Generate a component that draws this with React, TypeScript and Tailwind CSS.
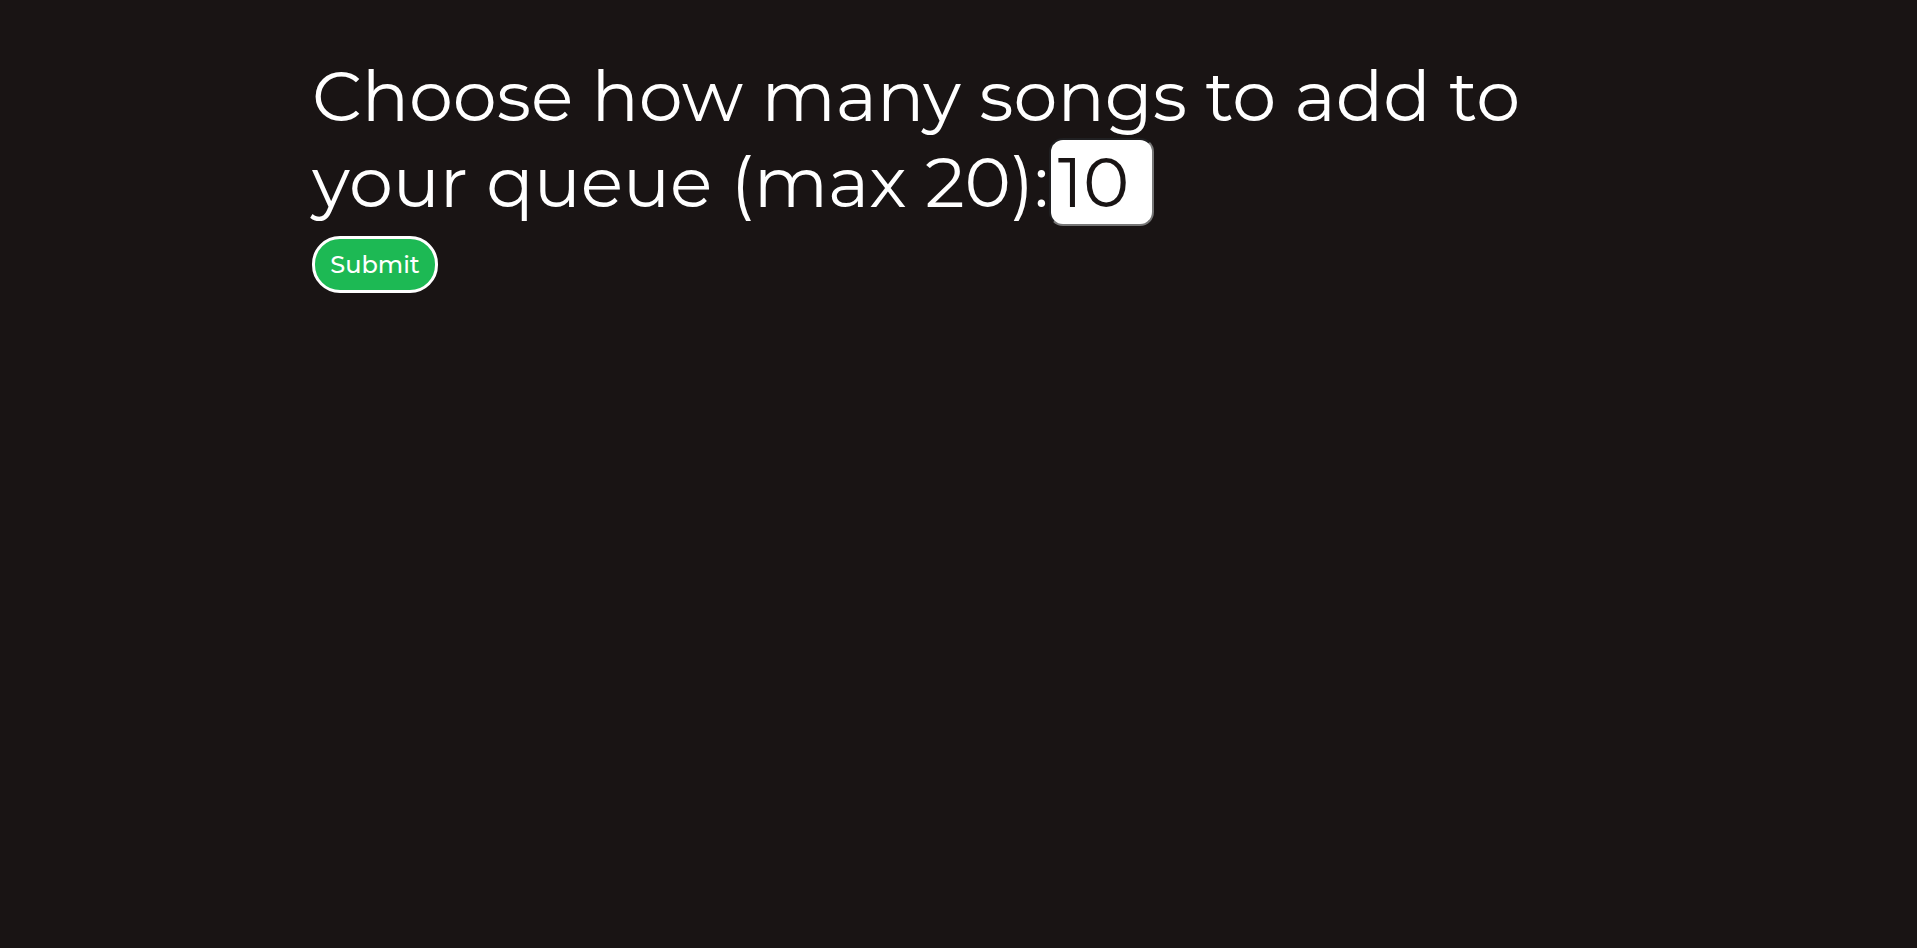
import { useState } from "react";

export default function App() {
  const [count, setCount] = useState("10");

  return (
    <main className="min-h-screen bg-[#191414] px-[312px] pt-[54px] font-['Montserrat','Inter',sans-serif] text-white">
      <form onSubmit={(event) => event.preventDefault()}>
        <div className="text-[70px] leading-[85px]">
          <label htmlFor="song-count">
            Choose how many songs to add to your queue (max 20):
          </label>
          <input
            id="song-count"
            type="text"
            inputMode="numeric"
            value={count}
            onChange={(event) => setCount(event.target.value)}
            className="-mt-px h-[88px] w-[105px] rounded-[14px] border-2 border-t-[#202022] border-r-[#767676] border-b-[#767676] border-l-[#202022] bg-white px-[7px] align-baseline text-[#191414] outline-none"
          />
        </div>
        <button
          type="submit"
          className="mt-[10px] h-[57px] w-[126px] rounded-[28px] border-3 border-white bg-[#1db954] text-[24px] leading-8 font-medium"
        >
          Submit
        </button>
      </form>
    </main>
  );
}
